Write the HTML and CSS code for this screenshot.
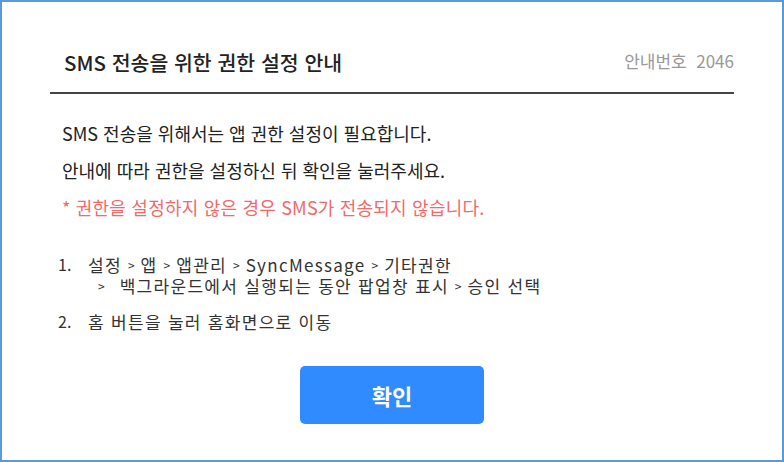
FILE: index.html
```html
<!DOCTYPE html>
<html lang="ko">
<head>
  <meta charset="UTF-8" />
  <meta name="viewport" content="width=device-width, initial-scale=1.0"/>
  <title>SMS 전송을 위한 권한 설정 안내</title>
  <link rel="stylesheet" href="styles.css">
</head>
<body>
  <div class="dialog">
    <div class="header">
      <h1>SMS 전송을 위한 권한 설정 안내</h1>
      <span class="notice-no">안내번호&nbsp;&nbsp;2046</span>
    </div>

    <div class="message">
      <p>SMS 전송을 위해서는 앱 권한 설정이 필요합니다.</p>
      <p>안내에 따라 권한을 설정하신 뒤 확인을 눌러주세요.</p>
      <p class="warn">* 권한을 설정하지 않은 경우 SMS가 전송되지 않습니다.</p>
    </div>

    <ol class="steps">
      <li>
        <span class="num">1.</span>
        <div>
          <div class="line">설정<span class="sep">&gt;</span>앱<span class="sep">&gt;</span>앱관리<span class="sep">&gt;</span>SyncMessage<span class="sep">&gt;</span>기타권한</div>
          <div class="line"><span class="sep first">&gt;</span>백그라운드에서 실행되는 동안 팝업창 표시<span class="sep">&gt;</span>승인 선택</div>
        </div>
      </li>
      <li>
        <span class="num">2.</span>
        <div class="line">홈 버튼을 눌러 홈화면으로 이동</div>
      </li>
    </ol>

    <div class="actions">
      <button class="btn">확인</button>
    </div>
  </div>
</body>
</html>
```

FILE: styles.css
```css
html, body {
  margin: 0;
  height: 100%;
}
body {
  font-family: "Noto Sans CJK KR", "Noto Sans", sans-serif;
  background: #fff;
}
.dialog {
  box-sizing: border-box;
  width: 784px;
  height: 462px;
  border: 2px solid #5b9bd5;
  padding: 0 48px;
}
.header {
  display: flex;
  justify-content: space-between;
  align-items: flex-end;
  padding: 47px 0 17px 14px;
  border-bottom: 2px solid #444;
}
h1 {
  margin: 0;
  font-size: 20.5px;
  line-height: 26px;
  font-weight: 500;
  color: #222;
}
.notice-no {
  font-size: 17px;
  line-height: 22px;
  color: #999;
  margin-bottom: 3px;
}
.message {
  margin-top: 21px;
  padding-left: 12px;
}
.message p {
  margin: 0;
  font-size: 18px;
  line-height: 37px;
  color: #222;
}
.message .warn {
  color: #f26a6a;
  letter-spacing: 0.2px;
}
.steps {
  list-style: none;
  margin: 28px 0 0;
  padding: 0 0 0 8px;
  font-size: 16px;
  line-height: 21px;
  color: #333;
}
.steps li {
  display: flex;
  margin-bottom: 15px;
}
.steps li:last-child {
  margin-bottom: 0;
}
.num {
  width: 30px;
  flex-shrink: 0;
}
.line {
  height: 21px;
  font-size: 17px;
  letter-spacing: 1.3px;
  white-space: nowrap;
}
.sep {
  display: inline-block;
  font-size: 12px;
  line-height: 10px;
  letter-spacing: 0;
  margin: 0 6px;
  vertical-align: 2px;
}
.sep.first {
  margin: 0 15px 0 10px;
}
.actions {
  display: flex;
  justify-content: center;
  margin-top: 34px;
}
.btn {
  width: 184px;
  height: 58px;
  border: none;
  border-radius: 5px;
  background: #2f8bff;
  color: #fff;
  font-family: inherit;
  font-size: 22px;
  font-weight: 700;
  cursor: pointer;
}
```
